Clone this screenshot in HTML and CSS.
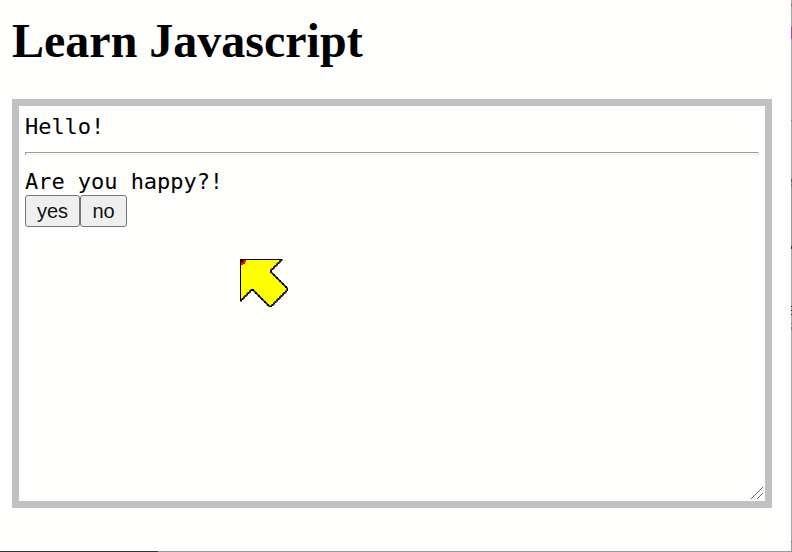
FILE: index.html
```html
<!DOCTYPE html>
<html lang="en"><head><meta charset="utf-8"><title>Learn Javascript</title><link rel="stylesheet" href="styles.css"></head>
<body>
<h1>Learn Javascript</h1>
<main class="console">
<div class="line">Hello!</div>
<hr>
<div class="line">Are you happy?!</div>
<div class="answers"><button>yes</button><button>no</button></div>
<svg class="grip" width="12" height="12" viewBox="0 0 12 12" shape-rendering="crispEdges"><path d="M0 12 12 0M6 12 12 6"/></svg>
</main>
<svg class="pointer" width="48" height="48" viewBox="0 0 32 32" shape-rendering="crispEdges">
<path class="arrow" d="M0 0H27.5L20.5 7.5V8.5L31.5 19.5V20.5L20.5 31.5H19.5L8.5 20.5H7.5L.5 27.5H0Z"/>
<path class="tip" d="M0 0H4V2H3V3H2V4H0Z"/>
<path d="M0 0H27V.667H0ZM0 0H.667V27H0ZM0 0H2V2H0Z"/>
<g class="edge">
<path d="M27 0h1v1h-1zm-1 1h1v1h-1zm-1 1h1v1h-1zm-1 1h1v1h-1zm-1 1h1v1h-1zm-1 1h1v1h-1zm-1 1h1v1h-1zm-1 1h1v1h-1z"/>
<path d="M20 8h1v1h-1zm1 1h1v1h-1zm1 1h1v1h-1zm1 1h1v1h-1zm1 1h1v1h-1zm1 1h1v1h-1zm1 1h1v1h-1zm1 1h1v1h-1zm1 1h1v1h-1zm1 1h1v1h-1zm1 1h1v1h-1zm1 1h1v1h-1z"/>
<path d="M31 20h1v1h-1zm-1 1h1v1h-1zm-1 1h1v1h-1zm-1 1h1v1h-1zm-1 1h1v1h-1zm-1 1h1v1h-1zm-1 1h1v1h-1zm-1 1h1v1h-1zm-1 1h1v1h-1zm-1 1h1v1h-1zm-1 1h1v1h-1zm-1 1h1v1h-1z"/>
<path d="M19 31h1v1h-1zm-1-1h1v1h-1zm-1-1h1v1h-1zm-1-1h1v1h-1zm-1-1h1v1h-1zm-1-1h1v1h-1zm-1-1h1v1h-1zm-1-1h1v1h-1zm-1-1h1v1h-1zm-1-1h1v1h-1zm-1-1h1v1h-1zm-1-1h1v1h-1z"/>
<path d="M7 20h1v1h-1zm-1 1h1v1h-1zm-1 1h1v1h-1zm-1 1h1v1h-1zm-1 1h1v1h-1zm-1 1h1v1h-1zm-1 1h1v1h-1zm-1 1h1v1h-1z"/>
</g>
</svg>
</body></html>
```
FILE: styles.css
```css
* { box-sizing: border-box; }
body {
  margin: 0; height: 552px; overflow: hidden; padding: 13px 20px 0 12px; position: relative;
  background:
    linear-gradient(90deg, #333 158px, #999 158px) bottom / 100% 1px no-repeat,
    linear-gradient(#a6a6a6 4px, #a050a0 4px 6px, #a6a6a6 6px 27px, #b040b0 27px 39px, #a6a6a6 39px 120px, #777 120px 121px, #a6a6a6 121px 179px, #555 179px 182px, #999 182px 184px, #777 184px 187px, #999 187px 246px, #333 246px 249px, #a6a6a6 249px 306px, #222 306px 307px, #aaa 307px 310px, #222 310px 311px, #aaa 311px 314px, #222 314px 315px, #a6a6a6 315px 323px, #777 323px 324px, #aaa 324px 327px, #777 327px 330px, #a6a6a6 330px 541px, #666 541px 542px, #999 542px) right / 1px 100% no-repeat,
    #fefefd;
}
h1 { margin: 0 0 31px; font: bold 48px/55px "Liberation Serif", serif; color: #000; }
.console { position: relative; width: 760px; height: 409px; border: 7px solid #c1c1c4; padding: 6px; }
.line { height: 28px; padding-top: 1px; font: 22px/28px "DejaVu Sans Mono", monospace; letter-spacing: -0.04px; color: #000; }
hr { height: 3px; margin: 12px 0; border: 1px solid; border-color: #999 #eee #eee #999; }
.answers { display: flex; }
button { height: 32px; width: 55px; border: 1px solid #767676; border-radius: 3px; background: #efefef; font: 20px "Liberation Sans", sans-serif; color: #111; padding: 0; }
button + button { width: 47px; }
.grip { position: absolute; right: 2px; bottom: 2px; fill: none; stroke: #666; }
.pointer { position: absolute; left: 240px; top: 259px; }
.arrow { fill: #ff0; }
.tip { fill: red; }
.edge { stroke: #000; stroke-width: .35; }
```
